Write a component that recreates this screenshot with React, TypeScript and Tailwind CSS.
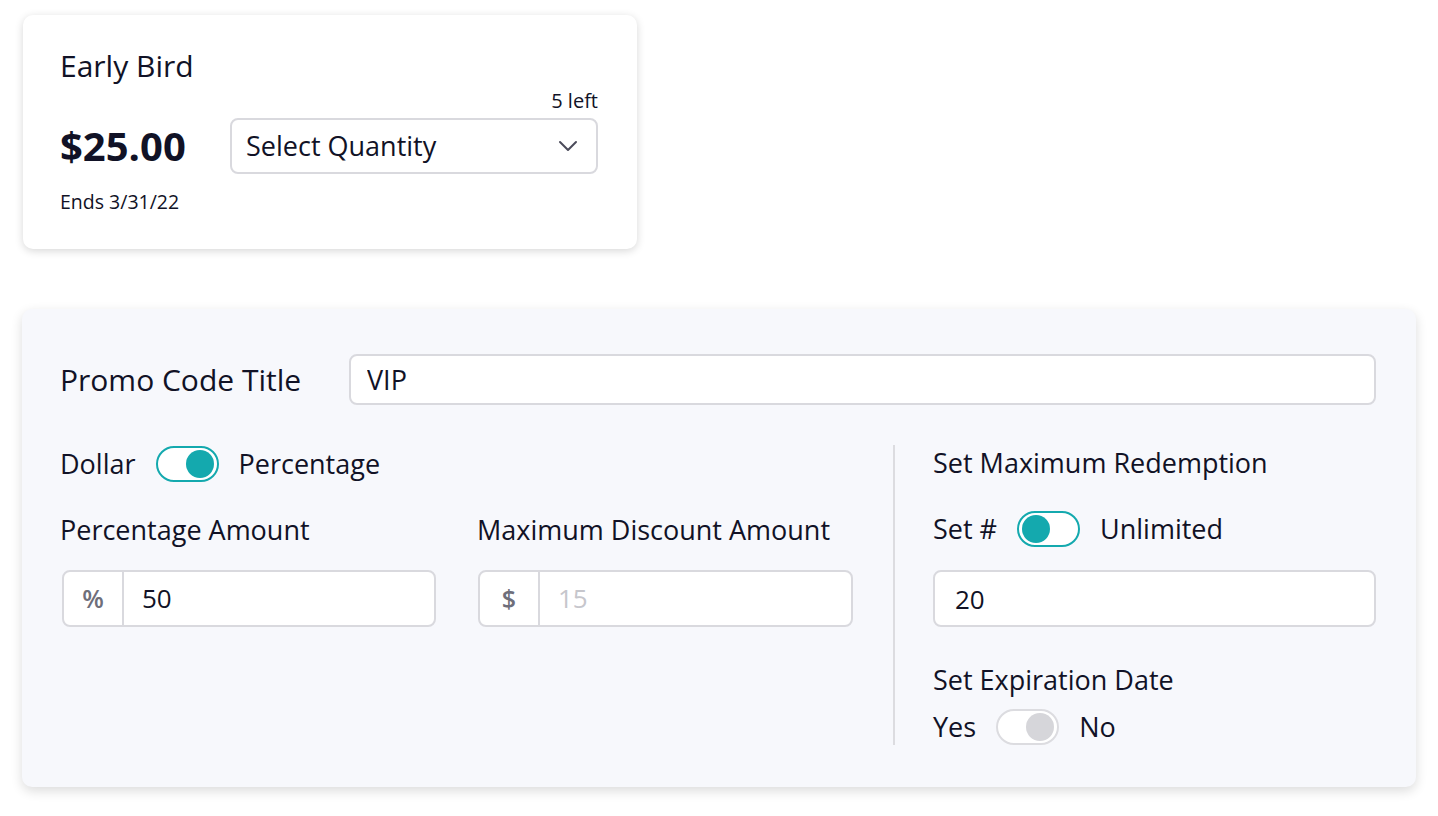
import { useState } from "react";

const FONT = { fontFamily: '"Open Sans", "Noto Sans", sans-serif' };

function Toggle({ on, active = true, onClick }: { on: boolean; active?: boolean; onClick?: () => void }) {
  return (
    <button
      type="button"
      onClick={onClick}
      className={`flex h-[36px] w-[63px] shrink-0 items-center rounded-full bg-white px-[3px] ${
        active ? "border-2 border-[#14a9ae]" : "border-2 border-[#dcdce0]"
      } ${on ? "justify-end" : "justify-start"}`}
    >
      <span className={`block h-[28px] w-[28px] rounded-full ${active ? "bg-[#14a9ae]" : "bg-[#d6d6da]"}`} />
    </button>
  );
}

function PrefixInput({ prefix, value, placeholder }: { prefix: string; value?: string; placeholder?: string }) {
  return (
    <div className="flex h-[57px] w-full overflow-hidden rounded-[8px] border-2 border-[#d9d9de] bg-white">
      <div className="flex w-[60px] items-center justify-center border-r-2 border-[#d9d9de] text-[25px] font-semibold text-[#6e6e7a]">
        {prefix}
      </div>
      <input
        defaultValue={value}
        placeholder={placeholder}
        className="min-w-0 flex-1 bg-transparent px-[18px] text-[26px] text-[#111226] outline-none placeholder:text-[#c6c6cc]"
        style={FONT}
      />
    </div>
  );
}

export default function App() {
  const [percentage, setPercentage] = useState(true);
  const [unlimited, setUnlimited] = useState(false);
  const [noExpiry, setNoExpiry] = useState(true);

  return (
    <div className="min-h-screen bg-white text-[#111226]" style={FONT}>
      <div className="pl-[23px] pt-[15px]">
        <div className="w-[614px] rounded-[10px] bg-white pb-[35px] pl-[37px] pr-[39px] pt-[32px] shadow-[0_2px_8px_rgba(0,0,0,0.16)]">
          <div className="text-[30px] leading-[38px]">Early Bird</div>
          <div className="mt-[4px] text-right text-[20px] leading-[24px]">5 left</div>
          <div className="mt-[5px] flex items-center">
            <div className="w-[170px] text-[40px] font-bold leading-[56px]">$25.00</div>
            <button
              type="button"
              className="flex h-[56px] flex-1 items-center justify-between rounded-[8px] border-2 border-[#d9d9de] bg-white pl-[14px] pr-[16px] text-[27px]"
            >
              <span>Select Quantity</span>
              <svg width="24" height="24" viewBox="0 0 24 24" fill="none" stroke="#4b4b5a" strokeWidth="2" strokeLinecap="round" strokeLinejoin="round">
                <path d="M4 8l8 8 8-8" />
              </svg>
            </button>
          </div>
          <div className="mt-[16px] text-[19.5px] leading-[24px]">Ends 3/31/22</div>
        </div>
      </div>

      <div className="pl-[22px] pt-[60px]">
        <div className="w-[1394px] rounded-[10px] bg-[#f7f8fc] pb-[42px] pl-[38px] pr-[40px] pt-[45px] shadow-[0_4px_12px_rgba(0,0,0,0.14)]">
          <div className="flex items-center">
            <div className="w-[289px] shrink-0 text-[30px]">Promo Code Title</div>
            <input
              defaultValue="VIP"
              className="h-[51px] flex-1 rounded-[8px] border-2 border-[#d9d9de] bg-white px-[16px] text-[27px] outline-none"
              style={FONT}
            />
          </div>

          <div className="mt-[40px] flex">
            <div className="w-[793px] shrink-0 pt-[1px]">
              <div className="flex h-[36px] items-center gap-[20px] text-[27px]">
                <span>Dollar</span>
                <Toggle on={percentage} onClick={() => setPercentage(!percentage)} />
                <span>Percentage</span>
              </div>
              <div className="mt-[31px] grid grid-cols-2 gap-x-[41px]">
                <div>
                  <div className="text-[27px] leading-[34px]">Percentage Amount</div>
                  <div className="mt-[23px] pl-[2px]">
                    <PrefixInput prefix="%" value="50" />
                  </div>
                </div>
                <div>
                  <div className="text-[27px] leading-[34px]">Maximum Discount Amount</div>
                  <div className="mt-[23px] pl-[1px]">
                    <PrefixInput prefix="$" placeholder="15" />
                  </div>
                </div>
              </div>
            </div>

            <div className="ml-[40px] mr-[38px] w-[2px] bg-[#dcdce0]" />

            <div className="flex-1 pt-[1px]">
              <div className="text-[27px] leading-[34px]">Set Maximum Redemption</div>
              <div className="mt-[31px] flex h-[36px] items-center gap-[20px] text-[27px]">
                <span>Set #</span>
                <Toggle on={unlimited} onClick={() => setUnlimited(!unlimited)} />
                <span>Unlimited</span>
              </div>
              <input
                defaultValue="20"
                className="mt-[23px] h-[57px] w-full rounded-[8px] border-2 border-[#d9d9de] bg-white px-[20px] text-[26px] outline-none"
                style={FONT}
              />
              <div className="mt-[36px] text-[27px] leading-[34px]">Set Expiration Date</div>
              <div className="mt-[12px] flex h-[36px] items-center gap-[20px] text-[27px]">
                <span>Yes</span>
                <Toggle on={noExpiry} active={false} onClick={() => setNoExpiry(!noExpiry)} />
                <span>No</span>
              </div>
            </div>
          </div>
        </div>
      </div>
    </div>
  );
}
